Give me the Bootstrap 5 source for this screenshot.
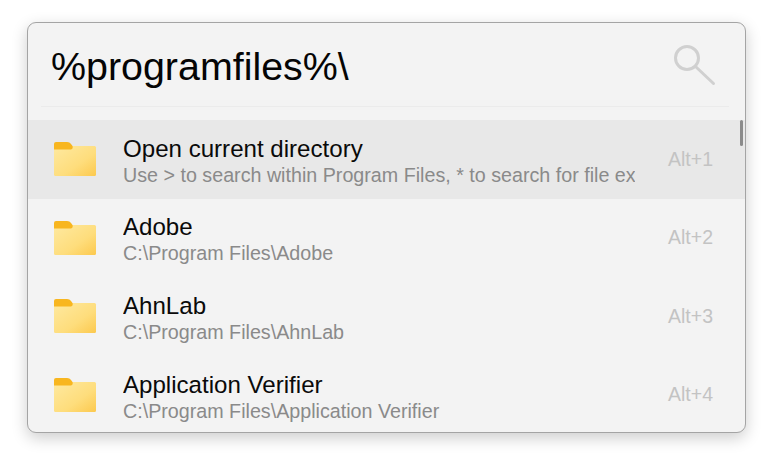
<!DOCTYPE html>
<html lang="en">
<head>
<meta charset="utf-8">
<title>Launcher</title>
<link href="https://cdn.jsdelivr.net/npm/bootstrap@5.3.0/dist/css/bootstrap.min.css" rel="stylesheet">
<style>
html,body{height:100%;margin:0;background:#fff;overflow:hidden}
body{font-family:"Liberation Sans",Arial,sans-serif;padding:22px 23px 30px 27px}
.launcher{height:411px;background:#f3f3f3;border:1px solid #a4a4a4;border-radius:9px;box-shadow:0 5px 16px rgba(0,0,0,.2);overflow:hidden;position:relative}
.searchbar{height:84px;margin:0 16px 0 13px;border-bottom:1px solid #ebebeb;padding:4px 13px 0 10px}
.query{font-size:39.4px;color:#050505;line-height:1}
.spacer-top{height:13px}
.result{height:78.6px;padding:0 32px 0 25px}
.result.is-active{background:#e8e8e8}
.folder{width:44px;height:34px;flex:none;margin-right:26px}
.result-text{width:512px;flex:none;overflow:hidden;white-space:nowrap;padding-top:3px}
.result-title{font-size:24.1px;line-height:28px;color:#0a0a0a}
.result-sub{font-size:19.7px;line-height:24px;color:#8a8a8a}
.hint{font-size:19.5px;color:#c3c3c3;margin-left:auto}
.scrollthumb{position:absolute;left:712px;top:97px;width:3px;height:26px;background:#8b8b8b;border-radius:2px}
</style>
</head>
<body>
<svg width="0" height="0" class="position-absolute">
  <defs>
    <linearGradient id="fg" x1="0" y1="0" x2="1" y2="1">
      <stop offset="0" stop-color="#fee9a0"/><stop offset=".6" stop-color="#fedd7c"/><stop offset="1" stop-color="#fcc94e"/>
    </linearGradient>
    <symbol id="folder" viewBox="0 0 44 34">
      <rect x="1" y="4" width="42" height="30" rx="1.500" fill="url(#fg)"/>
      <path d="M1 2a2 2 0 0 1 2-2h11c2 0 3 .8 4 2l1.500 2c.6 1.200 0 3.500-1.500 3.500H1z" fill="#f8b61f"/>
    </symbol>
  </defs>
</svg>
<div class="launcher">
  <div class="searchbar d-flex align-items-center justify-content-between">
    <div class="query">%programfiles%\</div>
    <svg width="44" height="44" viewBox="0 0 44 44" fill="none" stroke="#d0d0d0" stroke-width="3" stroke-linecap="round"><circle cx="15" cy="13" r="11.500"/><path d="M23.500 21.500L41.500 38.500"/></svg>
  </div>
  <div class="spacer-top"></div>
  <div class="result is-active d-flex align-items-center">
    <svg class="folder"><use href="#folder"/></svg>
    <div class="result-text">
      <div class="result-title">Open current directory</div>
      <div class="result-sub">Use &gt; to search within Program Files, * to search for file ex</div>
    </div>
    <div class="hint">Alt+1</div>
  </div>
  <div class="result d-flex align-items-center">
    <svg class="folder"><use href="#folder"/></svg>
    <div class="result-text">
      <div class="result-title">Adobe</div>
      <div class="result-sub">C:\Program Files\Adobe</div>
    </div>
    <div class="hint">Alt+2</div>
  </div>
  <div class="result d-flex align-items-center">
    <svg class="folder"><use href="#folder"/></svg>
    <div class="result-text">
      <div class="result-title">AhnLab</div>
      <div class="result-sub">C:\Program Files\AhnLab</div>
    </div>
    <div class="hint">Alt+3</div>
  </div>
  <div class="result d-flex align-items-center">
    <svg class="folder"><use href="#folder"/></svg>
    <div class="result-text">
      <div class="result-title">Application Verifier</div>
      <div class="result-sub">C:\Program Files\Application Verifier</div>
    </div>
    <div class="hint">Alt+4</div>
  </div>
  <div class="scrollthumb"></div>
</div>
<script src="https://cdn.jsdelivr.net/npm/bootstrap@5.3.0/dist/js/bootstrap.bundle.min.js"></script>
</body>
</html>
